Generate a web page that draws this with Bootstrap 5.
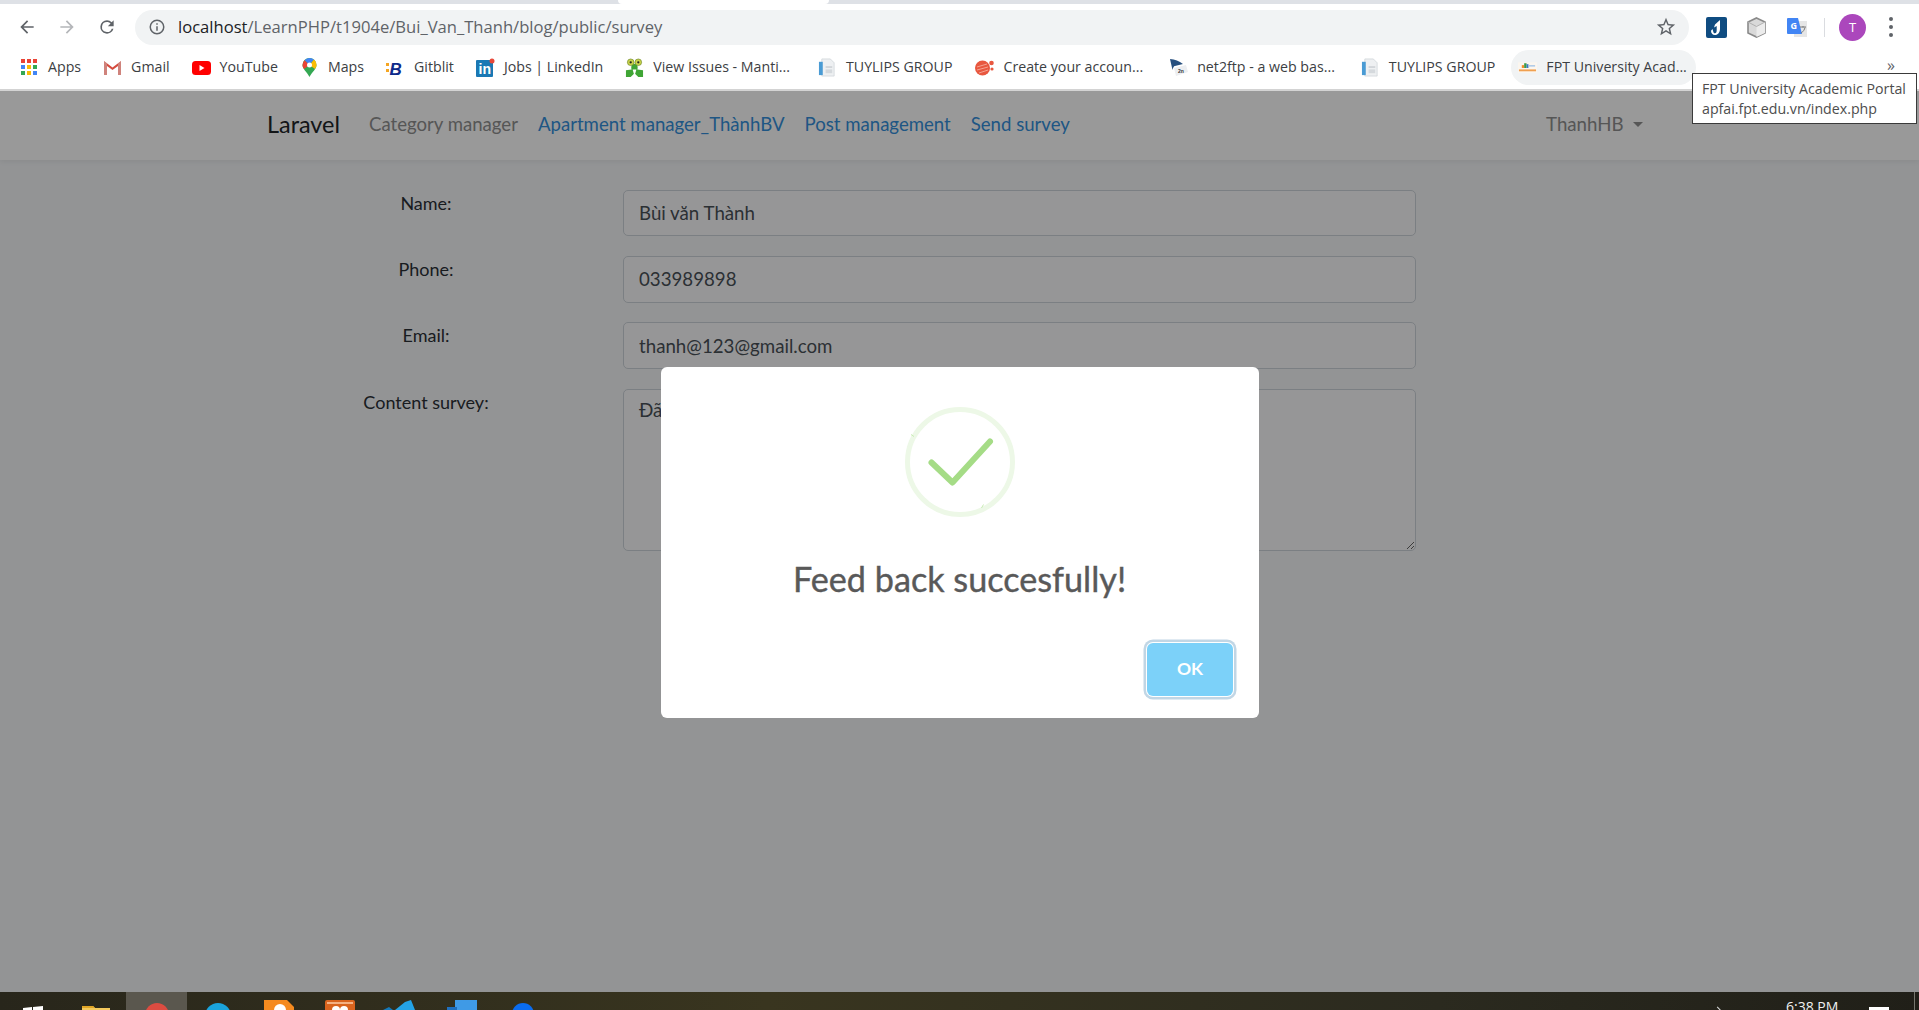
<!DOCTYPE html>
<html lang="vi">
<head>
  <meta charset="UTF-8">
  <meta name="viewport" content="width=device-width, initial-scale=1.0">
  <title>Survey</title>
  <link href="https://cdn.jsdelivr.net/npm/bootstrap@5.3.0/dist/css/bootstrap.min.css" rel="stylesheet">
  <style>
    html, body { height: 100%; overflow: hidden; }
    body {
      background: #fff;
      font-family: "Lato", "Noto Sans", sans-serif;
      position: relative;
    }
    /* browser chrome */
    .tab-strip { height: 9px; background: #fff; }
    .tab-band { height: 4px; background: #dee1e6; }
    .tab-gap { width: 211px; margin-left: 618px; height: 4px; background: #fff; border-radius: 0 0 6px 6px; }
    .tool-row { height: 36px; padding-left: 17px; padding-right: 17px; }
    .tool-btn { width: 20px; height: 20px; fill: #5f6368; flex: none; margin-right: 20px; }
    .tool-btn.off { fill: #b4b6b9; }
    .omni {
      flex: 1 1 auto; height: 35px; margin-left: -2px; border-radius: 18px;
      background: #f1f3f4; padding: 0 12px 0 13px;
      font-family: "Open Sans", sans-serif; font-size: 16.6px; color: #5f6368; white-space: nowrap;
    }
    .omni b { font-weight: 400; color: #202124; }
    .omni-info { width: 18px; height: 18px; fill: #5f6368; margin-right: 12px; }
    .omni-star { width: 22px; height: 22px; fill: #5f6368; }
    .ext-row { width: 213px; flex: none; padding-left: 17px; }
    .ext-ico { width: 21px; height: 21px; margin-right: 19px; flex: none; }
    .ext-sep { width: 1px; height: 19px; background: #dadce0; margin: 0 14px 0 -2px; }
    .avatar {
      width: 27px; height: 27px; border-radius: 50%; background: #ab47bc; color: #fff;
      font: 13px "Open Sans", sans-serif; margin-right: 23px; flex: none;
    }
    .kebab { width: 4px; flex: none; gap: 4px; }
    .kebab i { width: 4px; height: 4px; border-radius: 50%; background: #5f6368; display: block; }
    .mark-row { height: 44px; padding-left: 20px; font-family: "Open Sans", sans-serif; font-size: 14.2px; color: #3c4043; white-space: nowrap; position: relative; }
    .mark-item { height: 35px; flex: none; margin-right: 22px; }
    .mark-item svg { width: 19px; height: 19px; flex: none; }
    .mark-item span { margin-left: 9px; }
    .mark-item:nth-child(7) { margin-right: 28px; }
    .mark-item:nth-child(8) { margin-right: 23px; }
    .mark-item:nth-child(9), .mark-item:nth-child(10) { margin-right: 26px; }
    .mark-item:nth-child(11) { margin-right: 23px; }
    .mark-on { background: #f1f3f4; border-radius: 18px; padding: 0 9px 0 7px; margin-left: -7px; margin-right: 0; }
    .more-mark { position: absolute; left: 1887px; top: 8px; font-size: 16px; color: #5f6368; }
    .chrome-line { height: 2px; background: #d3d3d3; }
    /* tooltip */
    .tip-box {
      position: absolute; left: 1692px; top: 73px; width: 225px; height: 51px; background: #fff;
      border: 1px solid #3a3a3a; padding: 5px 9px; font-family: "Open Sans", sans-serif;
      font-size: 14.2px; line-height: 20px; color: #4d4d4d; z-index: 20; white-space: nowrap;
    }
    /* page */
    .page-area { flex: 1 1 auto; position: relative; overflow: hidden; background: #f5f7f9; font-size: 18px; color: #495057; }
    .app-bar { height: 69px; background: #fff; box-shadow: 0 2px 5px rgba(0,0,0,.06); padding: 0 0 2px 267px; }
    .app-brand { font-size: 23.4px; color: #212529; margin-right: 29px; line-height: 1; }
    .app-bar .nav-link { padding: 0; margin-right: 20px; color: #3490dc; font-size: 18.6px; }
    .app-bar .nav-link.dim { color: #8f8f8f; }
    .app-user { position: absolute; left: 1546px; top: 0; height: 67px; color: #8f8f8f; font-size: 18.7px; }
    .app-user .car { width: 0; height: 0; margin-left: 9px; border-top: 5.5px solid #8f8f8f; border-left: 5.5px solid transparent; border-right: 5.5px solid transparent; }
    .survey-form { padding: 30px 0 0 323px; }
    .form-line { margin-bottom: 19.8px; }
    .form-lbl { width: 206px; margin-right: 94px; text-align: center; color: #2b3036; font-size: 18px; line-height: 27px; flex: none; }
    .survey-form .form-control {
      width: 793px; height: 46.4px; font-size: 18.7px; border-radius: 5px; padding: 6px 15px;
      background: #fbfbfc; border-color: #ced4da; color: #495057;
    }
    .survey-form textarea.form-control { height: 162px; }
    /* overlay + dialog */
    .dim-layer { position: absolute; inset: 0; background: rgba(0,0,0,.4); z-index: 10; }
    .done-box { width: 598px; height: 351px; margin-top: 2px; border: 0; border-radius: 6px; padding-top: 40px; background: #fff; }
    .done-ico { width: 110px; height: 110px; display: block; margin: 0 auto; }
    .done-title { font-size: 34.2px; font-weight: 400; -webkit-text-stroke: .4px #595959; color: #595959; text-align: center; margin: 39px 0 0; line-height: 46px; }
    .done-foot { padding: 41px 25.5px 0 0; }
    .done-ok {
      width: 86px; height: 53px; border: 0; border-radius: 6px; background: #7cd1f9; color: #fff;
      font-weight: 700; font-size: 17.5px; padding: 0;
      box-shadow: 0 0 0 1px #fff, 0 0 0 3.5px rgba(43,114,165,.29);
    }
    .done-ok:hover, .done-ok:focus { background: #7cd1f9; color: #fff; }
    /* taskbar, cut off by the bottom of the window */
    .task-bar { height: 18px; flex: none; background: linear-gradient(90deg, #28261b, #39351f 40%, #2b2a1f 75%, #201f18); overflow: hidden; position: relative; }
    .task-row { height: 18px; }
    .task-slot { width: 61px; height: 18px; flex: none; }
    .task-slot:first-child { width: 65px; }
    .task-slot.on { background: #5a574e; }
    .task-slot svg { display: block; }
    .task-clock { position: absolute; left: 1786px; top: 5px; color: #f0f0f0; font-family: "Open Sans", sans-serif; font-size: 14px; line-height: 20px; white-space: nowrap; }
    .task-note { position: absolute; left: 1869px; top: 15px; width: 20px; height: 6px; background: #fff; }
    .task-edge { position: absolute; left: 1914px; top: 0; width: 1px; height: 18px; background: #77776f; }
    .task-chev { position: absolute; left: 1714px; top: 16px; width: 7px; height: 7px; border-top: 1px solid #ddd; border-right: 1px solid #ddd; transform: rotate(45deg); }
  </style>
</head>
<body class="d-flex flex-column">
  <svg width="0" height="0" class="position-absolute">
    <symbol id="docIco" viewBox="0 0 20 20">
      <path d="M4 1h9l4 4v14H4z" fill="#eef0f2" stroke="#c9ced3" stroke-width=".7"/>
      <rect x="1" y="4" width="4" height="14" fill="#4a9bd4"/>
      <rect x="8" y="9" width="7" height="1" fill="#b5bbc1"/>
      <rect x="8" y="12" width="7" height="4" fill="#d5d9dd"/>
    </symbol>
  </svg>

  <div class="tab-strip">
    <div class="tab-band"><div class="tab-gap"></div></div>
  </div>
  <div class="tool-row d-flex align-items-center">
    <svg class="tool-btn" viewBox="0 0 24 24"><path d="M20 11H7.800l5.600-5.600L12 4l-8 8 8 8 1.400-1.400L7.800 13H20z"/></svg>
    <svg class="tool-btn off" viewBox="0 0 24 24"><path d="M4 11h12.200l-5.600-5.600L12 4l8 8-8 8-1.400-1.400 5.600-5.600H4z"/></svg>
    <svg class="tool-btn" viewBox="0 0 24 24"><path d="M17.650 6.350A7.950 7.950 0 0 0 12 4a8 8 0 1 0 7.750 10h-2.080A6 6 0 1 1 12 6c1.660 0 3.140.690 4.220 1.780L13 11h7V4z"/></svg>
    <div class="omni d-flex align-items-center">
      <svg class="omni-info" viewBox="0 0 24 24"><path d="M11 7h2v2h-2zm0 4h2v6h-2zm1-9a10 10 0 1 0 0 20 10 10 0 0 0 0-20zm0 18a8 8 0 1 1 0-16 8 8 0 0 1 0 16z"/></svg>
      <div class="flex-grow-1"><b>localhost</b>/LearnPHP/t1904e/Bui_Van_Thanh/blog/public/survey</div>
      <svg class="omni-star" viewBox="0 0 24 24"><path d="M22 9.240l-7.190-.620L12 2 9.190 8.630 2 9.240l5.460 4.730L5.820 21 12 17.270 18.180 21l-1.630-7.030L22 9.240zM12 15.400l-3.760 2.270 1-4.280-3.320-2.880 4.380-.380L12 6.100l1.710 4.040 4.380.380-3.320 2.880 1 4.280L12 15.400z"/></svg>
    </div>
    <div class="ext-row d-flex align-items-center">
      <svg class="ext-ico" viewBox="0 0 21 21"><rect width="21" height="21" rx="2" fill="#0f4c81"/><path d="M14 3v8.500c0 4-2 6.500-5 6.500-2.500 0-4-1.700-4-4.200l1.500-1.800.8 2.800c.3 1 .9 1.500 1.700 1.500 1.100 0 1.700-1.200 1.700-3.300V9L8 10.500l1-3z" fill="#fff"/></svg>
      <svg class="ext-ico" viewBox="0 0 21 21"><path d="M10.500 1l8.500 4v11l-8.500 4L2 16V5z" fill="#d9d9d9" stroke="#8a8a8a" stroke-width="1.600"/><path d="M10.500 9.500L19 5v11l-8.500 4z" fill="#ececec"/><path d="M2 5l8.500 4.500L19 5" fill="none" stroke="#b0b0b0"/></svg>
      <svg class="ext-ico" viewBox="0 0 21 21"><rect x="8" y="4" width="13" height="16" fill="#e6e6e6"/><path d="M1 2a1 1 0 0 1 1-1h10l4 16H2a1 1 0 0 1-1-1z" fill="#4285f4"/><text x="4.500" y="12" font-family="Open Sans, sans-serif" font-size="9" font-weight="700" fill="#fff">G</text><path d="M14 10h6M17 9v1.500M15 16c2.500-1.500 3.500-3.500 4-5.500" stroke="#7a7a7a" fill="none"/></svg>
      <div class="ext-sep"></div>
      <div class="avatar d-flex align-items-center justify-content-center">T</div>
      <div class="kebab d-flex flex-column"><i></i><i></i><i></i></div>
    </div>
  </div>
  <div class="mark-row d-flex align-items-center">
    <div class="mark-item d-flex align-items-center">
      <svg viewBox="0 0 19 19"><rect x="1" y="1" width="4" height="4" fill="#ea4335"/><rect x="7" y="1" width="4" height="4" fill="#ea4335"/><rect x="13" y="1" width="4" height="4" fill="#ea4335"/><rect x="1" y="7" width="4" height="4" fill="#4285f4"/><rect x="7" y="7" width="4" height="4" fill="#fbbc05"/><rect x="13" y="7" width="4" height="4" fill="#34a853"/><rect x="1" y="13" width="4" height="4" fill="#34a853"/><rect x="7" y="13" width="4" height="4" fill="#fbbc05"/><rect x="13" y="13" width="4" height="4" fill="#4285f4"/></svg>
      <span>Apps</span>
    </div>
    <div class="mark-item d-flex align-items-center">
      <svg viewBox="0 0 19 19"><path d="M1 3l8.500 6.500L18 3v14h-3V8l-5.500 4L4 8v9H1z" fill="#d54c3f"/><path d="M1 3l3 2.500V17H1zM18 3l-3 2.500V17h3z" fill="#c8c8c8" opacity=".45"/></svg>
      <span>Gmail</span>
    </div>
    <div class="mark-item d-flex align-items-center">
      <svg viewBox="0 0 19 19"><rect y="3" width="19" height="14" rx="3.500" fill="#f00"/><path d="M7.500 7v6l5-3z" fill="#fff"/></svg>
      <span>YouTube</span>
    </div>
    <div class="mark-item d-flex align-items-center">
      <svg viewBox="0 0 19 19"><path d="M9.500 0a7 7 0 0 1 7 7c0 4-4 6.500-7 12-3-5.500-7-8-7-12a7 7 0 0 1 7-7z" fill="#34a853"/><path d="M4.500 2.200A7 7 0 0 1 14 1.600L9.500 7z" fill="#4285f4"/><path d="M14 1.600A7 7 0 0 1 16.500 7c0 1.500-.6 2.800-1.500 4L9.500 7z" fill="#fbbc05"/><path d="M2.500 7a7 7 0 0 1 2-4.800L9.500 7 4 11c-.9-1.200-1.500-2.500-1.500-4z" fill="#ea4335"/><circle cx="9.500" cy="7" r="2.500" fill="#fff"/></svg>
      <span>Maps</span>
    </div>
    <div class="mark-item d-flex align-items-center">
      <svg viewBox="0 0 19 19"><rect x="0" y="5" width="3" height="3" fill="#f5a623"/><rect x="0" y="11" width="3" height="3" fill="#f5a623"/><text x="3.500" y="16.500" font-family="Liberation Sans, sans-serif" font-size="17" font-weight="700" font-style="italic" fill="#0d2a8a">B</text></svg>
      <span>Gitblit</span>
    </div>
    <div class="mark-item d-flex align-items-center">
      <svg viewBox="0 0 19 19"><rect y="2" width="17" height="17" rx="1" fill="#1a78b4"/><text x="2.500" y="16" font-family="Liberation Sans, sans-serif" font-size="14" font-weight="700" fill="#fff">in</text><circle cx="16" cy="3" r="2.500" fill="#e8483a"/></svg>
      <span>Jobs | LinkedIn</span>
    </div>
    <div class="mark-item d-flex align-items-center">
      <svg viewBox="0 0 20 20"><path d="M10 6c3 0 4 3 3 6l6 1v7h-5l-4-4-4 4H1v-7l6-1c-1-3 0-6 3-6z" fill="#3fa535"/><path d="M8 12l2 7 2-7z" fill="#fff"/><circle cx="6" cy="4.500" r="3.500" fill="#c9d34a" stroke="#5d7a1e" stroke-width=".6"/><circle cx="14" cy="4.500" r="3.500" fill="#c9d34a" stroke="#5d7a1e" stroke-width=".6"/><circle cx="6" cy="4.500" r="1.200" fill="#222"/><circle cx="14" cy="4.500" r="1.200" fill="#222"/></svg>
      <span>View Issues - Manti...</span>
    </div>
    <div class="mark-item d-flex align-items-center">
      <svg><use href="#docIco"/></svg><span>TUYLIPS GROUP</span>
    </div>
    <div class="mark-item d-flex align-items-center">
      <svg viewBox="0 0 19 19"><circle cx="7.500" cy="10" r="7.500" fill="#e8573f"/><path d="M2 9l10-3M2 12l11-3M4 15l9-3" stroke="#f6b5a6" stroke-width=".8"/><circle cx="16.500" cy="5" r="2.300" fill="#e8573f"/><circle cx="17" cy="11" r="1.600" fill="#e8573f"/></svg>
      <span>Create your accoun...</span>
    </div>
    <div class="mark-item d-flex align-items-center">
      <svg viewBox="0 0 19 19"><path d="M1 1c5 .5 9 2 13 5l-8 2c-1-.3-2 2-2.500 4z" fill="#27507f"/><path d="M5 10l12-3 2 7-12 4z" fill="#eceef1"/><text x="9" y="15" font-family="Liberation Sans, sans-serif" font-size="5" font-weight="700" fill="#333">2n</text></svg>
      <span>net2ftp - a web bas...</span>
    </div>
    <div class="mark-item d-flex align-items-center">
      <svg><use href="#docIco"/></svg><span>TUYLIPS GROUP</span>
    </div>
    <div class="mark-item mark-on d-flex align-items-center">
      <svg viewBox="0 0 20 19"><rect x="0" y="4" width="20" height="11" fill="#fbf6ef"/><rect x="4" y="7" width="2.500" height="3" fill="#f28c28"/><rect x="6.500" y="5" width="2.500" height="5" fill="#3a9c4a"/><rect x="9" y="6" width="2" height="4" fill="#3b78c4"/><rect x="11" y="7" width="7" height="1.500" fill="#a9c6e6"/><rect x="1" y="11.500" width="18" height="2" fill="#f0a050"/></svg>
      <span>FPT University Acad...</span>
    </div>
    <div class="more-mark">»</div>
  </div>
  <div class="chrome-line"></div>

  <div class="tip-box">FPT University Academic Portal<br>apfai.fpt.edu.vn/index.php</div>

  <div class="page-area">
    <nav class="app-bar d-flex align-items-center">
      <a class="app-brand text-decoration-none" href="#">Laravel</a>
      <ul class="nav">
        <li class="nav-item"><a class="nav-link dim" href="#">Category manager</a></li>
        <li class="nav-item"><a class="nav-link" href="#">Apartment manager_ThànhBV</a></li>
        <li class="nav-item"><a class="nav-link" href="#">Post management</a></li>
        <li class="nav-item"><a class="nav-link" href="#">Send survey</a></li>
      </ul>
      <div class="app-user d-flex align-items-center">ThanhHB<span class="car"></span></div>
    </nav>
    <form class="survey-form">
      <div class="form-line d-flex">
        <label class="form-lbl">Name:</label>
        <input class="form-control" type="text" value="Bùi văn Thành">
      </div>
      <div class="form-line d-flex">
        <label class="form-lbl">Phone:</label>
        <input class="form-control" type="text" value="033989898">
      </div>
      <div class="form-line d-flex">
        <label class="form-lbl">Email:</label>
        <input class="form-control" type="text" value="thanh@123@gmail.com">
      </div>
      <div class="form-line d-flex">
        <label class="form-lbl">Content survey:</label>
        <textarea class="form-control">Đã gửi</textarea>
      </div>
    </form>
    <div class="dim-layer d-flex align-items-center justify-content-center">
      <div class="modal-content done-box">
        <svg class="done-ico" viewBox="0 0 110 110">
          <circle cx="55" cy="55" r="52.500" fill="none" stroke="#edf8e7" stroke-width="5"/>
          <path d="M6 27.500l3 2M76.500 101l2-3.500" stroke="#c9ecb5" stroke-width="1"/>
          <path d="M26.500 55.500L47.500 75.500 85 34.500" fill="none" stroke="#a5dc86" stroke-width="6" stroke-linecap="round" stroke-linejoin="round"/>
        </svg>
        <h2 class="done-title">Feed back succesfully!</h2>
        <div class="done-foot d-flex justify-content-end">
          <button type="button" class="btn done-ok">OK</button>
        </div>
      </div>
    </div>
  </div>

  <div class="task-bar">
    <div class="task-row d-flex">
      <div class="task-slot d-flex align-items-end justify-content-center"><svg width="20" height="4" viewBox="0 0 20 4"><path d="M0 2l9-1v3H0zM10 1l10-1v4H10z" fill="#fff"/></svg></div>
      <div class="task-slot d-flex align-items-end justify-content-center"><svg width="28" height="4" viewBox="0 0 28 4"><path d="M0 0h11l2 2h15v2H0z" fill="#f4c95d"/><path d="M0 0h11l2 2H0z" fill="#e0a526"/></svg></div>
      <div class="task-slot on d-flex align-items-end justify-content-center"><svg width="24" height="7" viewBox="0 0 24 7"><circle cx="12" cy="12" r="12" fill="#dc4c41"/></svg></div>
      <div class="task-slot d-flex align-items-end justify-content-center"><svg width="26" height="7" viewBox="0 0 26 7"><circle cx="13" cy="13" r="13" fill="#1aa3dc"/></svg></div>
      <div class="task-slot d-flex align-items-end justify-content-center"><svg width="30" height="10" viewBox="0 0 30 10"><path d="M0 0h23l7 7v3H0z" fill="#f58a1f"/><circle cx="16" cy="10" r="6" fill="#fff"/></svg></div>
      <div class="task-slot d-flex align-items-end justify-content-center"><svg width="30" height="10" viewBox="0 0 30 10"><rect width="30" height="12" rx="2" fill="#d9641e"/><rect x="2" y="2" width="26" height="2" fill="#f4b183"/><circle cx="11" cy="10" r="4" fill="#fff"/><circle cx="19" cy="10" r="4" fill="#fff"/></svg></div>
      <div class="task-slot d-flex align-items-end justify-content-center"><svg width="36" height="10" viewBox="0 0 36 10"><path d="M22 2l6-2 4 10H12z" fill="#24a3e6"/><path d="M0 10l6-3 4 3z" fill="#1478b8"/></svg></div>
      <div class="task-slot d-flex align-items-end justify-content-center"><svg width="30" height="10" viewBox="0 0 30 10"><rect x="8" width="22" height="10" fill="#3f9ae6"/><rect y="7" width="10" height="3" fill="#1f6fbd"/></svg></div>
      <div class="task-slot d-flex align-items-end justify-content-center"><svg width="22" height="7" viewBox="0 0 22 7"><circle cx="11" cy="11" r="11" fill="#0a6cf0"/></svg></div>
    </div>
    <span class="task-chev"></span>
    <span class="task-clock">6:38 PM</span>
    <span class="task-note"></span>
    <span class="task-edge"></span>
  </div>
</body>
</html>
